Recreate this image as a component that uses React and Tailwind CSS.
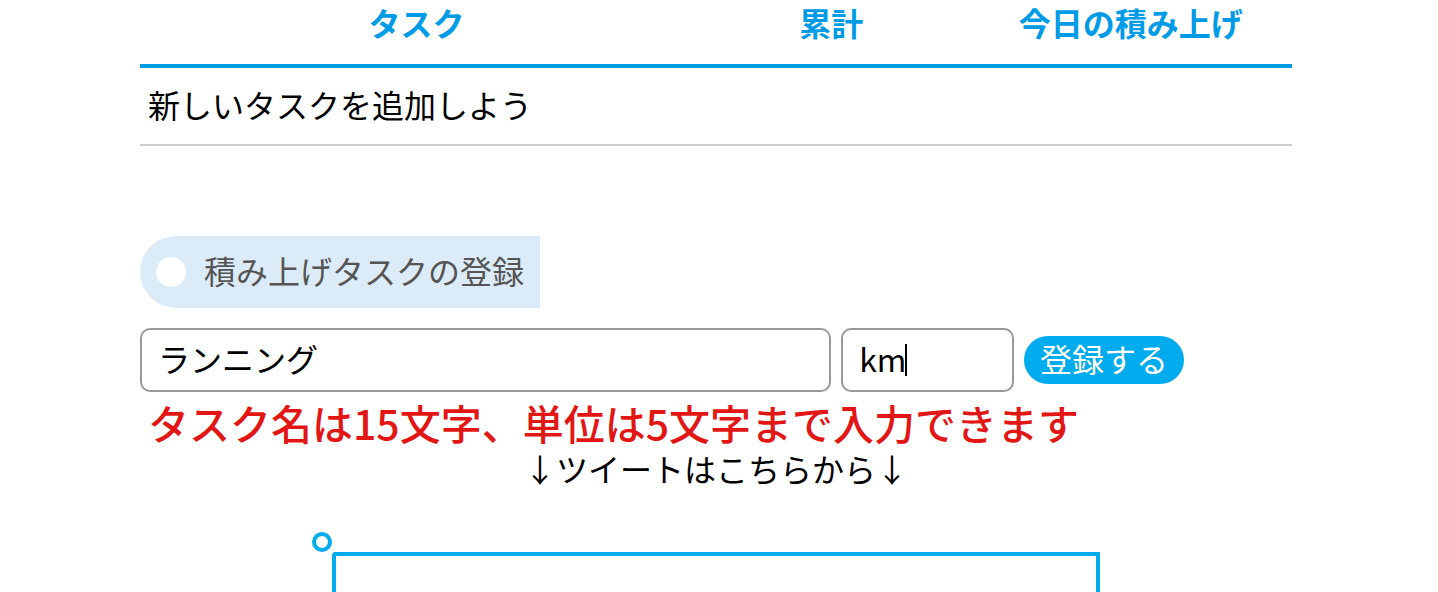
import React, { useState } from 'react';

function TaskTable() {
  return (
    <table className="w-full table-fixed border-collapse">
      <colgroup>
        <col className="w-[48%]" />
        <col className="w-[24%]" />
        <col className="w-[28%]" />
      </colgroup>
      <thead>
        <tr className="border-b-4 border-[#009be7] text-[#009be7]">
          <th className="pb-5 font-bold">タスク</th>
          <th className="pb-5 font-bold">累計</th>
          <th className="pb-5 font-bold">今日の積み上げ</th>
        </tr>
      </thead>
      <tbody>
        <tr className="border-b-2 border-[#cccccc]">
          <td colSpan={3} className="px-2 pb-[18px] pt-3.5">新しいタスクを追加しよう</td>
        </tr>
      </tbody>
    </table>
  );
}

function TaskForm() {
  const [name, setName] = useState('ランニング');
  const [unit, setUnit] = useState('km');
  return (
    <form className="mt-5 flex items-center gap-2.5" onSubmit={(e) => e.preventDefault()}>
      <input
        aria-label="タスク名"
        maxLength={15}
        value={name}
        onChange={(e) => setName(e.target.value)}
        className="h-16 w-3/5 min-w-0 rounded-[10px] border-2 border-[#999999] bg-white px-4 pb-1 outline-none"
      />
      <div className="relative w-[15%]">
        <input
          aria-label="単位"
          maxLength={5}
          value={unit}
          onChange={(e) => setUnit(e.target.value)}
          className="h-16 w-full rounded-[10px] border-2 border-[#999999] bg-white px-4 pb-1 caret-transparent outline-none"
        />
        <span className="pointer-events-none absolute left-16 top-4 h-8 w-0.5 bg-black" />
      </div>
      <button type="submit" className="h-12 shrink-0 rounded-full bg-[#00abee] px-4 pb-1 text-white">
        登録する
      </button>
    </form>
  );
}

export default function App() {
  return (
    <main className="flex min-h-screen flex-col bg-white pl-[140px] pr-[146px] font-['Noto_Sans_CJK_JP',sans-serif] text-[32px] leading-[44px] text-black">
      <TaskTable />
      <h2 className="mt-[90px] flex h-[72px] items-center gap-[18px] self-start rounded-l-full bg-[#dbebf8] px-4 text-[#555555]">
        <span className="size-[30px] rounded-full bg-white" />
        <span className="pb-1">積み上げタスクの登録</span>
      </h2>
      <TaskForm />
      <p className="mt-2.5 whitespace-nowrap px-2 text-[41px] font-medium leading-[40px] text-[#e31616]">
        タスク名は15文字、単位は5文字まで入力できます
      </p>
      <p className="mt-1 text-center">↓ツイートはこちらから↓</p>
      <section className="relative mx-auto mt-[62px] w-2/3 flex-1 rounded-tl border-4 border-b-0 border-[#00abee]">
        <span className="absolute -left-6 -top-6 size-5 rounded-full border-4 border-[#00abee]" />
      </section>
    </main>
  );
}
